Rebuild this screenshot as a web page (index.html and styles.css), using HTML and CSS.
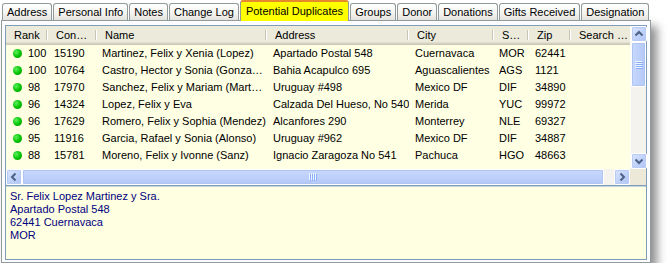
FILE: index.html
```html
<!DOCTYPE html>
<html lang="en">
<head>
    <meta charset="UTF-8">
    <title>Potential Duplicates</title>
    <link rel="stylesheet" href="styles.css">
</head>
<body>
    <div class="window">
        <!-- Tab strip -->
        <div class="tabs">
            <div class="tab">Address</div>
            <div class="tab">Personal Info</div>
            <div class="tab">Notes</div>
            <div class="tab">Change Log</div>
            <div class="tab active">Potential Duplicates</div>
            <div class="tab">Groups</div>
            <div class="tab">Donor</div>
            <div class="tab">Donations</div>
            <div class="tab">Gifts Received</div>
            <div class="tab">Designation</div>
        </div>

        <div class="panel">
            <div class="frame">
                <div class="list">
                    <div class="list-main">
                        <div class="header">
                            <div class="col c-rank">Rank</div>
                            <div class="col c-con">Con…</div>
                            <div class="col c-name">Name</div>
                            <div class="col c-addr">Address</div>
                            <div class="col c-city">City</div>
                            <div class="col c-st">S…</div>
                            <div class="col c-zip">Zip</div>
                            <div class="col c-search">Search …</div>
                        </div>
                        <div class="row">
                            <div class="cell c-rank"><span class="dot"></span>100</div>
                            <div class="cell c-con">15190</div>
                            <div class="cell c-name">Martinez, Felix y Xenia (Lopez)</div>
                            <div class="cell c-addr">Apartado Postal 548</div>
                            <div class="cell c-city">Cuernavaca</div>
                            <div class="cell c-st">MOR</div>
                            <div class="cell c-zip">62441</div>
                            <div class="cell c-search"></div>
                        </div>
                        <div class="row">
                            <div class="cell c-rank"><span class="dot"></span>100</div>
                            <div class="cell c-con">10764</div>
                            <div class="cell c-name">Castro, Hector y Sonia (Gonza…</div>
                            <div class="cell c-addr">Bahia Acapulco 695</div>
                            <div class="cell c-city">Aguascalientes</div>
                            <div class="cell c-st">AGS</div>
                            <div class="cell c-zip">1121</div>
                            <div class="cell c-search"></div>
                        </div>
                        <div class="row">
                            <div class="cell c-rank"><span class="dot"></span>98</div>
                            <div class="cell c-con">17970</div>
                            <div class="cell c-name">Sanchez, Felix y Mariam (Mart…</div>
                            <div class="cell c-addr">Uruguay #498</div>
                            <div class="cell c-city">Mexico DF</div>
                            <div class="cell c-st">DIF</div>
                            <div class="cell c-zip">34890</div>
                            <div class="cell c-search"></div>
                        </div>
                        <div class="row">
                            <div class="cell c-rank"><span class="dot"></span>96</div>
                            <div class="cell c-con">14324</div>
                            <div class="cell c-name">Lopez, Felix y Eva</div>
                            <div class="cell c-addr">Calzada Del Hueso, No 540</div>
                            <div class="cell c-city">Merida</div>
                            <div class="cell c-st">YUC</div>
                            <div class="cell c-zip">99972</div>
                            <div class="cell c-search"></div>
                        </div>
                        <div class="row">
                            <div class="cell c-rank"><span class="dot"></span>96</div>
                            <div class="cell c-con">17629</div>
                            <div class="cell c-name">Romero, Felix y Sophia (Mendez)</div>
                            <div class="cell c-addr">Alcanfores 290</div>
                            <div class="cell c-city">Monterrey</div>
                            <div class="cell c-st">NLE</div>
                            <div class="cell c-zip">69327</div>
                            <div class="cell c-search"></div>
                        </div>
                        <div class="row">
                            <div class="cell c-rank"><span class="dot"></span>95</div>
                            <div class="cell c-con">11916</div>
                            <div class="cell c-name">Garcia, Rafael y Sonia (Alonso)</div>
                            <div class="cell c-addr">Uruguay #962</div>
                            <div class="cell c-city">Mexico DF</div>
                            <div class="cell c-st">DIF</div>
                            <div class="cell c-zip">34887</div>
                            <div class="cell c-search"></div>
                        </div>
                        <div class="row">
                            <div class="cell c-rank"><span class="dot"></span>88</div>
                            <div class="cell c-con">15781</div>
                            <div class="cell c-name">Moreno, Felix y Ivonne (Sanz)</div>
                            <div class="cell c-addr">Ignacio Zaragoza No 541</div>
                            <div class="cell c-city">Pachuca</div>
                            <div class="cell c-st">HGO</div>
                            <div class="cell c-zip">48663</div>
                            <div class="cell c-search"></div>
                        </div>
                    </div>

                    <!-- Vertical scrollbar -->
                    <div class="vscroll">
                        <div class="sb-btn">
                            <svg width="14" height="14" viewBox="0 0 14 14"><polyline points="3.5,8.5 7,5 10.5,8.5" fill="none" stroke="#4d6185" stroke-width="2"/></svg>
                        </div>
                        <div class="sb-thumb v">
                            <svg width="8" height="8" viewBox="0 0 8 8">
                                <path d="M0 0.5H7M0 2.5H7M0 4.5H7M0 6.5H7" stroke="#eef4fe"/>
                                <path d="M1 1.5H8M1 3.5H8M1 5.5H8M1 7.5H8" stroke="#8cb0f8"/>
                            </svg>
                        </div>
                        <div class="sb-track"></div>
                        <div class="sb-btn">
                            <svg width="14" height="14" viewBox="0 0 14 14"><polyline points="3.5,5.5 7,9 10.5,5.5" fill="none" stroke="#4d6185" stroke-width="2"/></svg>
                        </div>
                    </div>

                    <!-- Horizontal scrollbar -->
                    <div class="hscroll">
                        <div class="sb-btn">
                            <svg width="14" height="14" viewBox="0 0 14 14"><polyline points="8.5,3.5 5,7 8.5,10.5" fill="none" stroke="#4d6185" stroke-width="2"/></svg>
                        </div>
                        <div class="sb-thumb h">
                            <svg width="8" height="8" viewBox="0 0 8 8">
                                <path d="M0.5 0V7M2.5 0V7M4.5 0V7M6.5 0V7" stroke="#eef4fe"/>
                                <path d="M1.5 1V8M3.5 1V8M5.5 1V8M7.5 1V8" stroke="#8cb0f8"/>
                            </svg>
                        </div>
                        <div class="sb-track"></div>
                        <div class="sb-btn">
                            <svg width="14" height="14" viewBox="0 0 14 14"><polyline points="5.5,3.5 9,7 5.5,10.5" fill="none" stroke="#4d6185" stroke-width="2"/></svg>
                        </div>
                    </div>
                    <div class="corner"></div>
                </div>

                <div class="detail">
                    <p>Sr. Felix Lopez Martinez y Sra.</p>
                    <p>Apartado Postal 548</p>
                    <p>62441 Cuernavaca</p>
                    <p>MOR</p>
                </div>
            </div>
        </div>
    </div>
</body>
</html>
```

FILE: styles.css
```css
/* General Reset */
* {
    margin: 0;
    padding: 0;
    box-sizing: border-box;
}

body {
    background: #ffffff;
    font-family: "Liberation Sans", Arial, sans-serif;
    font-size: 11px;
    color: #000000;
}

.window {
    width: 650px;
    margin-left: 1px;
}

/* Tabs */
.tabs {
    display: flex;
    align-items: flex-end;
    height: 20px;
    padding-left: 1px;
}

.tab {
    height: 17px;
    line-height: 16px;
    padding: 0 4px;
    margin-right: 1px;
    border: 1px solid #919b9c;
    border-bottom: none;
    border-radius: 3px 3px 0 0;
    background: linear-gradient(#ffffff, #f3f3ef 60%, #e4e3dc);
    white-space: nowrap;
}

.tab.active {
    position: relative;
    z-index: 1;
    height: 21px;
    line-height: 18px;
    margin-bottom: -1px;
    padding: 0 5px;
    border-top: 2px solid #e68b2c;
    background: #ffff00;
}

/* Tab body */
.panel {
    height: 243px;
    padding: 4px 3px 2px 3px;
    border: 1px solid #919b9c;
    background: #fcfcfe;
    box-shadow: 6px 6px 9px rgba(0, 0, 0, 0.45);
}

.frame {
    height: 100%;
    border: 1px solid #7f9db9;
    display: flex;
    flex-direction: column;
}

/* List view */
.list {
    display: grid;
    grid-template-columns: 1fr 16px;
    grid-template-rows: 143px 16px;
    background: #ffffe3;
    border-bottom: 1px solid #7f9db9;
}

.list-main {
    overflow: hidden;
}

.header {
    display: flex;
    height: 19px;
    background: linear-gradient(#ebeadb 0, #ebeadb 16px, #e2decd 16px, #e2decd 17px, #d6d2c2 17px, #d6d2c2 18px, #cbc7b8 18px);
}

.header .col {
    position: relative;
    line-height: 18px;
    padding-left: 8px;
    white-space: nowrap;
    overflow: hidden;
}

.header .col::after {
    content: "";
    position: absolute;
    right: 1px;
    top: 4px;
    bottom: 5px;
    width: 1px;
    background: #c7c5b2;
    box-shadow: 1px 0 0 #ffffff;
}

.header .c-search::after {
    display: none;
}

.row {
    display: flex;
    height: 17px;
    line-height: 17px;
}

.cell {
    padding-left: 6px;
    white-space: nowrap;
    overflow: hidden;
}

.row .c-name,
.row .c-st {
    padding-left: 5px;
}

.c-rank { width: 42px; }
.c-con { width: 49px; }
.c-name { width: 170px; }
.c-addr { width: 142px; }
.c-city { width: 85px; }
.c-st { width: 35px; }
.c-zip { width: 42px; }
.c-search { flex: 1; }

.row .c-rank {
    display: flex;
    align-items: center;
    padding-left: 7px;
}

.dot {
    width: 9px;
    height: 9px;
    margin-right: 6px;
    border-radius: 50%;
    background: radial-gradient(circle at 35% 35%, #5cf25c, #00c000 55%, #009000);
}

/* Scrollbars */
.vscroll,
.hscroll {
    display: flex;
    background: #f4f3ee;
}

.vscroll {
    flex-direction: column;
    border-left: 1px solid #fdfdfa;
}

.sb-btn {
    width: 16px;
    height: 16px;
    flex: none;
    display: flex;
    align-items: center;
    justify-content: center;
    border: 1px solid #ffffff;
    border-radius: 2px;
    background: linear-gradient(135deg, #dbe6fd, #bcd0f9 60%, #b0c5f5);
    box-shadow: inset 0 0 0 1px #b9cbf3;
}

.sb-thumb {
    display: flex;
    align-items: center;
    justify-content: center;
    border: 1px solid #ffffff;
    border-radius: 2px;
    background: linear-gradient(90deg, #c9d8fc, #bed1fb 50%, #b4c8f6);
    box-shadow: inset 0 0 0 1px #aec4f3;
}

.sb-thumb.v {
    height: 45px;
    flex: none;
}

.sb-thumb.h {
    flex: 1;
    margin-right: 10px;
    background: linear-gradient(#c9d8fc, #bed1fb 50%, #b4c8f6);
}

.sb-track {
    flex: 1;
}

.hscroll .sb-track {
    flex: none;
}

.corner {
    background: #ece9d8;
}

/* Address preview */
.detail {
    flex: 1;
    padding: 3px 4px;
    background: #ffffe1;
    border-top: 1px solid #c5d3e2;
    color: #000080;
    line-height: 13px;
}
```
